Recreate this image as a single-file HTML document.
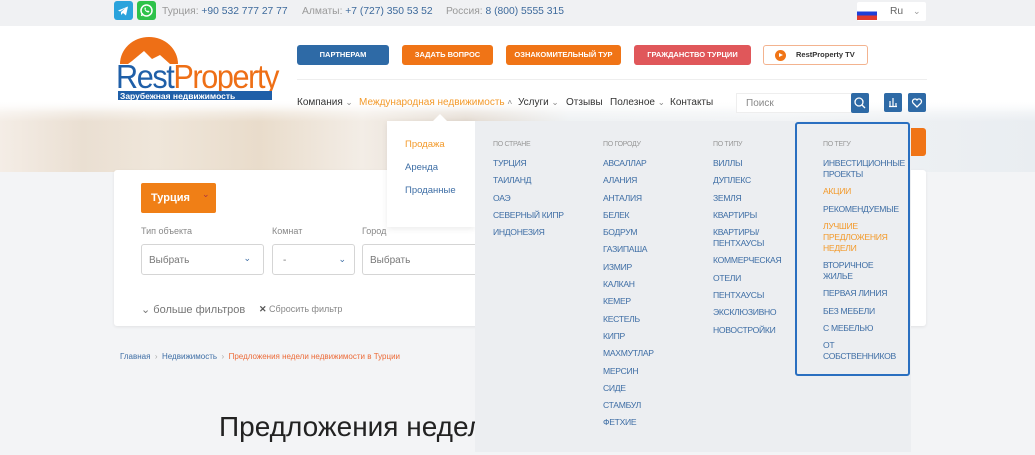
<!DOCTYPE html>
<html><head><meta charset="utf-8"><style>
*{margin:0;padding:0;box-sizing:border-box}
body{width:1035px;height:455px;overflow:hidden;background:#f3f4f6;font-family:"Liberation Sans","Noto Sans CJK SC",sans-serif;position:relative;color:#333}
.a{position:absolute}
.top{left:0;top:0;width:1035px;height:26px;background:#f0f1f3}
.top span{font-size:10.3px;color:#999;position:absolute;top:6px}
.top b{font-weight:normal;color:#3d6a9c}
.hdr{left:0;top:26px;width:1035px;height:86px;background:#fff}
.hero{left:0;top:100px;width:1035px;height:72px;background:linear-gradient(180deg,#fff 0%,rgba(255,255,255,0) 30%),linear-gradient(90deg,#f4ede6 0%,#eadfd2 8%,#efe6da 15%,#e9dccb 25%,#f3ede6 35%,#e3dad0 45%,#eef1f3 55%,#f1f3f5 75%,#e9edf1 100%)}
.btn{position:absolute;top:45px;height:20px;border-radius:3px;color:#fff;font-size:7.5px;font-weight:bold;text-align:center;line-height:20px}
.nav{position:absolute;top:97px;font-size:10px;color:#333;white-space:nowrap}
.dd{left:475px;top:121px;width:436px;height:331px;background:#eceef1}
.col{position:absolute;top:18px;font-size:8.6px;color:#3e6ea5;line-height:11px;letter-spacing:-0.3px}
.col .h{color:#999;font-size:7px;margin-bottom:8px}
.col div{margin-bottom:6.3px}
.or{color:#f39a2b}
</style></head><body>
<div class="a top">
 <div class="a" style="left:114px;top:1px;width:19px;height:19px;background:#2aa3dc;border-radius:3px"><svg width="19" height="19" viewBox="0 0 19 19"><path d="M4 9.5l10-4-2 9-3-2.5-2 2v-3l4.5-4-5.5 3.5z" fill="#fff"/></svg></div>
 <div class="a" style="left:137px;top:1px;width:19px;height:19px;background:#2ec24a;border-radius:3px"><svg width="19" height="19" viewBox="0 0 19 19"><circle cx="9.5" cy="9.5" r="5.5" fill="none" stroke="#fff" stroke-width="1.5"/><path d="M4.5 15l1-3" stroke="#fff" stroke-width="1.5"/><path d="M7.5 7.5c0 2 2 4 4 4l1-1-1.5-1-1 .5-1.5-1.5.5-1-1-1.5z" fill="#fff"/></svg></div>
 <span style="left:162px">Турция: <b>+90 532 777 27 77</b></span>
 <span style="left:302px">Алматы: <b>+7 (727) 350 53 52</b></span>
 <span style="left:446px">Россия: <b>8 (800) 5555 315</b></span>
 <div class="a" style="left:857px;top:2px;width:69px;height:19px;background:#fff;border-radius:2px"></div>
 <div class="a" style="left:857px;top:7px;width:20px;height:13px;background:linear-gradient(#fff 0 33%,#1e3fd8 33% 66%,#e03a2e 66%)"></div>
 <span style="left:890px;color:#666">Ru</span><span style="left:913px;color:#999;font-size:9px">⌄</span>
</div>
<div class="a hero"></div>
<div class="a hdr" style="height:74px"></div>
<div class="a" style="left:0;top:100px;width:1035px;height:12px;background:linear-gradient(#fff,rgba(255,255,255,0))"></div>
<svg class="a" style="left:114px;top:36px" width="170" height="66" viewBox="0 0 170 66">
 <path d="M6 28 A29 27 0 0 1 64 28 L56 28 L46 19 L38 23 L30 15 L18 25 L14 28 Z" fill="#ee6f16"/>
 <text x="2" y="52" font-family="Liberation Sans" font-size="33" fill="#1f5fa8" letter-spacing="-1.5" textLength="162" lengthAdjust="spacingAndGlyphs">Rest<tspan fill="#ee6f16">Property</tspan></text>
 <rect x="4" y="55" width="154" height="9" fill="#1f5fa8"/>
 <text x="6" y="63" font-family="Liberation Sans" font-size="8.5" font-weight="bold" fill="#fff">Зарубежная недвижимость</text>
</svg>
<div class="btn" style="left:297px;width:92px;background:#2e6aa6">ПАРТНЕРАМ</div>
<div class="btn" style="left:402px;width:91px;background:#f07416">ЗАДАТЬ ВОПРОС</div>
<div class="btn" style="left:506px;width:115px;background:#f07416">ОЗНАКОМИТЕЛЬНЫЙ ТУР</div>
<div class="btn" style="left:634px;width:117px;background:#e0575a">ГРАЖДАНСТВО ТУРЦИИ</div>
<div class="btn" style="left:763px;width:105px;background:#fff;border:1px solid #f3b38f;color:#333;line-height:18px;text-align:left;padding-left:32px">RestProperty TV</div>
<div class="a" style="left:775px;top:50px;width:11px;height:11px;border-radius:50%;background:#f07416"></div>
<div class="a" style="left:779px;top:53px;width:0;height:0;border-left:4px solid #fff;border-top:2.5px solid transparent;border-bottom:2.5px solid transparent"></div>
<div class="a" style="left:297px;top:79px;width:630px;height:1px;background:#eee"></div>
<div class="nav" style="left:297px">Компания <small style="color:#888">⌄</small></div>
<div class="nav" style="left:359px;color:#f39a2b">Международная недвижимость <small style="color:#888">˄</small></div>
<div class="nav" style="left:518px">Услуги <small style="color:#888">⌄</small></div>
<div class="nav" style="left:566px">Отзывы</div>
<div class="nav" style="left:610px">Полезное <small style="color:#888">⌄</small></div>
<div class="nav" style="left:670px">Контакты</div>
<div class="a" style="left:736px;top:93px;width:133px;height:20px;background:#fff;border:1px solid #eee;font-size:10px;color:#888;padding:4px 9px">Поиск</div>
<div class="a" style="left:851px;top:93px;width:18px;height:20px;background:#2e6aa6;border-radius:2px"><svg width="18" height="20"><circle cx="8" cy="9" r="4" fill="none" stroke="#fff" stroke-width="1.3"/><path d="M11 12l3 3" stroke="#fff" stroke-width="1.3"/></svg></div>
<div class="a" style="left:884px;top:93px;width:18px;height:19px;background:#2e6aa6;border-radius:2px"><svg width="18" height="19"><path d="M6 13V8M9 13V5M12 13v-3M5 13.5h8" stroke="#fff" stroke-width="1.2" fill="none"/></svg></div>
<div class="a" style="left:908px;top:93px;width:18px;height:19px;background:#2e6aa6;border-radius:2px"><svg width="18" height="19"><path d="M9 14L5 10a2.3 2.3 0 0 1 4-3 2.3 2.3 0 0 1 4 3z" fill="none" stroke="#fff" stroke-width="1.3"/></svg></div>
<div class="a" style="left:911px;top:128px;width:15px;height:28px;background:#f07416;border-radius:0 3px 3px 0"></div>
<div class="a" style="left:114px;top:170px;width:812px;height:156px;background:#fff;border-radius:3px;box-shadow:0 1px 3px rgba(0,0,0,.08)"></div>
<div class="a" style="left:141px;top:183px;width:75px;height:30px;background:#f07f16;border-radius:2px;color:#fff;font-size:11px;font-weight:bold;padding:9px 10px">Турция <span style="position:absolute;left:61px;top:6px;font-weight:normal;font-size:9px;color:#a34">⌄</span></div>
<div class="a" style="left:141px;top:226px;font-size:9px;color:#888">Тип объекта</div>
<div class="a" style="left:272px;top:226px;font-size:9px;color:#888">Комнат</div>
<div class="a" style="left:362px;top:226px;font-size:9px;color:#888">Город</div>
<div class="a" style="left:141px;top:244px;width:123px;height:31px;border:1px solid #d5d5d5;border-radius:3px;font-size:10px;color:#777;padding:10px 7px">Выбрать<span style="position:absolute;right:12px;top:8px;color:#3e6ea5;font-size:9px">⌄</span></div>
<div class="a" style="left:272px;top:244px;width:83px;height:31px;border:1px solid #d5d5d5;border-radius:3px;font-size:10px;color:#777;padding:10px 10px">-<span style="position:absolute;right:8px;top:9px;color:#3e6ea5;font-size:9px">⌄</span></div>
<div class="a" style="left:362px;top:244px;width:113px;height:31px;border:1px solid #d5d5d5;border-right:none;border-radius:3px 0 0 3px;font-size:10px;color:#777;padding:10px 7px">Выбрать</div>
<div class="a" style="left:141px;top:303px;font-size:11px;color:#777">⌄ больше фильтров</div>
<div class="a" style="left:259px;top:304px;font-size:9px;color:#888"><b style="color:#555">✕</b> Сбросить фильтр</div>
<div class="a" style="left:120px;top:352px;font-size:8px;color:#3e6ea5">Главная <span style="color:#aaa">&nbsp;›&nbsp;</span> Недвижимость <span style="color:#aaa">&nbsp;›&nbsp;</span> <span style="color:#ec6c3a">Предложения недели недвижимости в Турции</span></div>
<div class="a" style="left:219px;top:411px;font-size:28px;color:#222;white-space:nowrap">Предложения недели</div>
<div class="a" style="left:387px;top:121px;width:88px;height:106px;background:#fff;box-shadow:0 2px 6px rgba(0,0,0,.08)"></div>
<div class="a" style="left:432px;top:114px;width:0;height:0;border-left:8px solid transparent;border-right:8px solid transparent;border-bottom:8px solid #fff"></div>
<div class="a" style="left:405px;top:139px;font-size:9.5px;color:#f39a2b">Продажа</div>
<div class="a" style="left:405px;top:162px;font-size:9.5px;color:#3e6ea5">Аренда</div>
<div class="a" style="left:405px;top:185px;font-size:9.5px;color:#3e6ea5">Проданные</div>
<div class="a dd">
 <div class="col" style="left:18px"><div class="h">ПО СТРАНЕ</div><div>ТУРЦИЯ</div><div>ТАИЛАНД</div><div>ОАЭ</div><div>СЕВЕРНЫЙ КИПР</div><div>ИНДОНЕЗИЯ</div></div>
 <div class="col" style="left:128px"><div class="h">ПО ГОРОДУ</div><div>АВСАЛЛАР</div><div>АЛАНИЯ</div><div>АНТАЛИЯ</div><div>БЕЛЕК</div><div>БОДРУМ</div><div>ГАЗИПАША</div><div>ИЗМИР</div><div>КАЛКАН</div><div>КЕМЕР</div><div>КЕСТЕЛЬ</div><div>КИПР</div><div>МАХМУТЛАР</div><div>МЕРСИН</div><div>СИДЕ</div><div>СТАМБУЛ</div><div>ФЕТХИЕ</div></div>
 <div class="col" style="left:238px"><div class="h">ПО ТИПУ</div><div>ВИЛЛЫ</div><div>ДУПЛЕКС</div><div>ЗЕМЛЯ</div><div>КВАРТИРЫ</div><div>КВАРТИРЫ/<br>ПЕНТХАУСЫ</div><div>КОММЕРЧЕСКАЯ</div><div>ОТЕЛИ</div><div>ПЕНТХАУСЫ</div><div>ЭКСКЛЮЗИВНО</div><div>НОВОСТРОЙКИ</div></div>
 <div class="a" style="left:320px;top:1px;width:115px;height:254px;border:2px solid #2a6fc0;border-radius:3px"></div>
 <div class="col" style="left:348px"><div class="h">ПО ТЕГУ</div><div>ИНВЕСТИЦИОННЫЕ<br>ПРОЕКТЫ</div><div class="or">АКЦИИ</div><div>РЕКОМЕНДУЕМЫЕ</div><div class="or">ЛУЧШИЕ<br>ПРЕДЛОЖЕНИЯ<br>НЕДЕЛИ</div><div>ВТОРИЧНОЕ<br>ЖИЛЬЕ</div><div>ПЕРВАЯ ЛИНИЯ</div><div>БЕЗ МЕБЕЛИ</div><div>С МЕБЕЛЬЮ</div><div>ОТ<br>СОБСТВЕННИКОВ</div></div>
</div>
</body></html>
